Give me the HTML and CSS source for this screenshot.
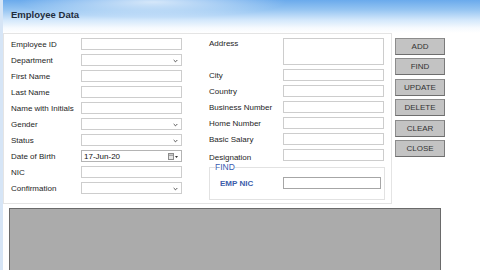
FILE: index.html
```html
<!DOCTYPE html>
<html>
<head>
<meta charset="utf-8">
<link rel="stylesheet" href="styles.css">
</head>
<body>
<div class="window">
  <div class="header"><span class="title">Employee Data</span></div>
  <div class="main">
    <div class="panel">
      <div class="col col1">
        <div class="row"><span class="lbl">Employee ID</span><span class="inp"></span></div>
        <div class="row"><span class="lbl">Department</span><span class="inp sel"><svg class="chev" viewBox="0 0 6 4"><polyline points="0.8,0.8 3,3 5.2,0.8"/></svg></span></div>
        <div class="row"><span class="lbl">First Name</span><span class="inp"></span></div>
        <div class="row"><span class="lbl">Last Name</span><span class="inp"></span></div>
        <div class="row"><span class="lbl">Name with Initials</span><span class="inp"></span></div>
        <div class="row"><span class="lbl">Gender</span><span class="inp sel"><svg class="chev" viewBox="0 0 6 4"><polyline points="0.8,0.8 3,3 5.2,0.8"/></svg></span></div>
        <div class="row"><span class="lbl">Status</span><span class="inp sel"><svg class="chev" viewBox="0 0 6 4"><polyline points="0.8,0.8 3,3 5.2,0.8"/></svg></span></div>
        <div class="row"><span class="lbl">Date of Birth</span><span class="inp date"><span class="dval">17-Jun-20</span><svg class="cal" viewBox="0 0 10 8"><rect x="0.5" y="0.5" width="5" height="6" fill="#e6e6e6" stroke="#8c8c8c"/><line x1="0.5" y1="2.2" x2="5.5" y2="2.2" stroke="#8c8c8c"/><polygon points="7,3 10,3 8.5,5" fill="#333"/></svg></span></div>
        <div class="row"><span class="lbl">NIC</span><span class="inp"></span></div>
        <div class="row"><span class="lbl">Confirmation</span><span class="inp sel"><svg class="chev" viewBox="0 0 6 4"><polyline points="0.8,0.8 3,3 5.2,0.8"/></svg></span></div>
      </div>
      <div class="col col2">
        <div class="row tall"><span class="lbl top">Address</span><span class="inp area"></span></div>
        <div class="row"><span class="lbl">City</span><span class="inp"></span></div>
        <div class="row"><span class="lbl">Country</span><span class="inp"></span></div>
        <div class="row"><span class="lbl">Business Number</span><span class="inp"></span></div>
        <div class="row"><span class="lbl">Home Number</span><span class="inp"></span></div>
        <div class="row"><span class="lbl">Basic Salary</span><span class="inp"></span></div>
        <div class="row"><span class="lbl low">Designation</span><span class="inp"></span></div>
        <fieldset class="findbox">
          <legend class="findlegend">FIND</legend>
          <div class="findrow"><span class="niclbl">EMP NIC</span><span class="inp nic"></span></div>
        </fieldset>
      </div>
    </div>
    <div class="buttons">
      <div class="btn">ADD</div>
      <div class="btn">FIND</div>
      <div class="btn">UPDATE</div>
      <div class="btn">DELETE</div>
      <div class="btn">CLEAR</div>
      <div class="btn">CLOSE</div>
    </div>
  </div>
  <div class="grid"></div>
</div>
</body>
</html>
```

FILE: styles.css
```css
html, body {
  margin: 0;
  padding: 0;
  background: #ffffff;
}
body {
  width: 480px;
  height: 270px;
  overflow: hidden;
  font-family: "Liberation Sans", Arial, sans-serif;
  color: #222;
}
.window {
  height: 270px;
  border-left: 3px solid #d6e5f6;
  box-sizing: border-box;
}
.header {
  height: 33px;
  box-sizing: border-box;
  padding: 4px 0 0 8px;
  background:
    radial-gradient(ellipse 190px 22px at 150px 2px, rgba(255,255,255,0.7), rgba(255,255,255,0) 70%),
    linear-gradient(to bottom, #6aaaec 0%, #96c5f2 30%, #d2e7fb 60%, #f6fafe 85%, #ffffff 100%);
}
.title {
  font-size: 9.5px;
  font-weight: bold;
  color: #1f2d3d;
}
.main {
  display: flex;
  align-items: flex-start;
}
.panel {
  width: 389px;
  height: 171px;
  box-sizing: border-box;
  border: 1px solid #e4e4e4;
  padding: 4px 7px 0 7px;
  display: flex;
  gap: 27px;
}
.col {
  display: flex;
  flex-direction: column;
  gap: 4px;
}
.row {
  display: flex;
  align-items: center;
  height: 12px;
}
.row.tall {
  height: 27px;
  align-items: flex-start;
}
.lbl {
  font-size: 8px;
  color: #1e1e1e;
  white-space: nowrap;
}
.col1 .lbl { width: 70px; }
.col2 .lbl { width: 74px; }
.lbl.top { margin-top: 1px; }
.lbl.low { margin-top: 4px; }
.inp {
  width: 101px;
  height: 12px;
  box-sizing: border-box;
  border: 1px solid #cdcdcd;
  background: #fff;
  position: relative;
  display: flex;
  align-items: center;
}
.inp.area { height: 27px; }
.chev {
  position: absolute;
  right: 3px;
  top: 4px;
  width: 5px;
  height: 4px;
  fill: none;
  stroke: #333;
  stroke-width: 1;
}
.inp.date {
  border-color: #b4b4b4;
}
.dval {
  font-size: 8px;
  margin-left: 2px;
  color: #111;
}
.cal {
  position: absolute;
  right: 3px;
  top: 2px;
  width: 10px;
  height: 8px;
}
.findbox {
  margin: -2px 0 0 0;
  width: 175px;
  height: 37px;
  box-sizing: border-box;
  border: 1px solid #e2e2e2;
  padding: 5px 3px 0 10px;
}
.findlegend {
  font-size: 8.5px;
  color: #3a5bb0;
  padding: 0;
  margin-left: -5px;
  line-height: 9px;
}
.findrow {
  display: flex;
  align-items: center;
  height: 12px;
}
.niclbl {
  width: 63px;
  font-size: 8px;
  font-weight: bold;
  color: #3c5caa;
}
.inp.nic {
  width: 98px;
  border-color: #a6a6a6;
}
.buttons {
  margin: 5px 0 0 3px;
  display: flex;
  flex-direction: column;
  gap: 3.4px;
}
.btn {
  width: 50px;
  height: 17px;
  box-sizing: border-box;
  background: #c3c3c3;
  border: 1px solid #8c8c8c;
  border-bottom-color: #6e6e6e;
  border-right-color: #7a7a7a;
  font-size: 8px;
  color: #333;
  display: flex;
  align-items: center;
  justify-content: center;
}
.grid {
  margin: 4px 0 0 6px;
  width: 432px;
  height: 70px;
  box-sizing: border-box;
  background: #ababab;
  border: 1px solid #6a6a6a;
}
```
